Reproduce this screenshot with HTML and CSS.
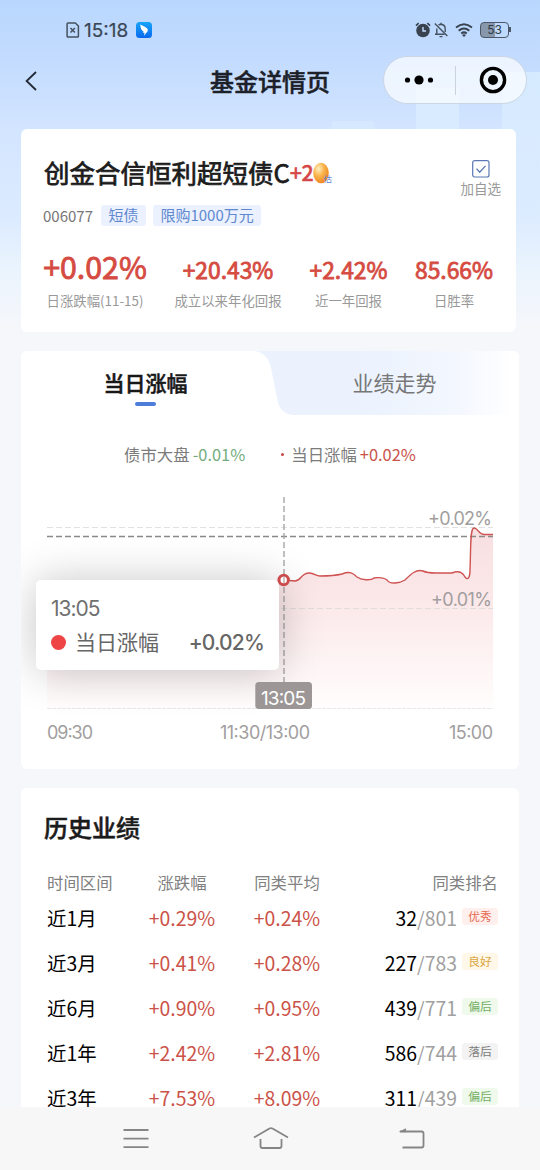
FILE: index.html
```html
<!DOCTYPE html>
<html lang="zh-CN">
<head>
<meta charset="utf-8">
<title>基金详情页</title>
<link rel="stylesheet" href="styles.css">
</head>
<body>
<div class="screen">
  <div class="decor"><i class="bar bar-a"></i><i class="bar bar-b"></i><i class="bar bar-c"></i></div>
  <header class="status">
    <div class="status-left">
      <svg width="14" height="16" viewBox="0 0 14 16" fill="none" stroke="#46515f" stroke-width="1.5"><path d="M2 .9h7.3L12.4 4v10.2q0 .8-.8.8H2q-.9 0-.9-.8V1.800Q1.100.9 2 .9Z"/><path d="M4.500 6l4.400 4.600M8.900 6l-4.400 4.600"/></svg>
      <span class="clock">15:18</span>
      <svg width="16" height="16" viewBox="0 0 16 16"><defs><linearGradient id="app" x2="0" y2="1"><stop stop-color="#18a4fa"/><stop offset="1" stop-color="#0869ee"/></linearGradient></defs><rect width="16" height="16" rx="3.500" fill="url(#app)"/><path d="M4.300 2.600Q9 4.700 11.700 6.900q.4.700-.3 1.900H12L8 13.800l.6-3H7l.5-1.300Q4.500 8 4.300 2.600Z" fill="#fff"/></svg>
    </div>
    <div class="status-right">
      <svg width="16" height="16" viewBox="0 0 16 16"><circle cx="8" cy="8.500" r="6.800" fill="#38434f"/><path d="M.9 3.600 3.700 1.200M12.300 1.200l2.800 2.400" stroke="#38434f" stroke-width="1.600"/><path d="M8 5v4h3" fill="none" stroke="#c5ddfe" stroke-width="1.400"/></svg>
      <svg width="14" height="16" viewBox="0 0 14 16" fill="none" stroke="#46515f" stroke-width="1.400"><path d="M2.800 12V6.500M4.500 3.200Q5.500 2.500 7 2.300q4.200.7 4.200 4.200V10M1 12.300h9.500M7 .8v2M5.500 14.600h3"/><path d="M.8 1.500 13.300 14"/></svg>
      <svg class="wifi" width="18" height="14" viewBox="0 0 18 14" fill="none" stroke="#38434f" stroke-width="2"><path d="M1 4.500q8-6.500 16 0M3.700 7.700q5.300-4.400 10.600 0M6.300 10.500q2.700-2.300 5.400 0"/><path d="m9 14-2-2q2-1.500 4 0Z" fill="#38434f" stroke="none"/></svg>
      <div class="battery"><span>53</span></div>
    </div>
  </header>
  <nav class="titlebar">
    <svg class="back" width="12" height="20" viewBox="0 0 12 20" fill="none" stroke="#222a35" stroke-width="1.800"><path d="M11 1 1.600 10 11 19"/></svg>
    <h1>基金详情页</h1>
    <div class="capsule">
      <svg width="30" height="10" viewBox="0 0 30 10"><circle cx="3.500" cy="5" r="2.600"/><circle cx="15" cy="5" r="4.600"/><circle cx="26.500" cy="5" r="2.600"/></svg>
      <i></i>
      <svg width="28" height="28" viewBox="0 0 28 28"><circle cx="14" cy="14" r="11.600" fill="none" stroke="#000" stroke-width="3.400"/><circle cx="14" cy="14" r="5"/></svg>
    </div>
  </nav>

  <section class="card fund">
    <div class="fund-head">
      <div>
        <h2>创金合信恒利超短债C<b>+2</b><svg class="egg" width="20" height="22" viewBox="0 0 20 22"><defs><radialGradient id="egg" cx=".35" cy=".3" r=".75"><stop stop-color="#fff0c4"/><stop offset=".45" stop-color="#f9b64d"/><stop offset="1" stop-color="#ee8220"/></radialGradient></defs><ellipse cx="8" cy="11" rx="7.800" ry="10.300" fill="url(#egg)"/><text x="10.500" y="19.500">估</text></svg></h2>
        <div class="tags"><span>006077</span><em>短债</em><em>限购1000万元</em></div>
      </div>
      <div class="watch"><svg width="18" height="18" viewBox="0 0 18 18" fill="none" stroke="#5b78b4"><rect x=".7" y=".7" width="16.300" height="16.300" rx="2" stroke-width="1.200"/><path d="m4.500 8.600 3.200 3.700 5.800-6.400" stroke-width="1.300"/></svg><span>加自选</span></div>
    </div>
    <div class="stats">
      <div class="main"><strong>+0.02%</strong><span>日涨跌幅(11-15)</span></div>
      <div><strong>+20.43%</strong><span>成立以来年化回报</span></div>
      <div><strong>+2.42%</strong><span>近一年回报</span></div>
      <div><strong>85.66%</strong><span>日胜率</span></div>
    </div>
  </section>

  <section class="card trend">
    <div class="tabs">
      <svg class="tab-bg" width="498" height="65" viewBox="0 0 498 65"><defs><linearGradient id="tab"><stop offset=".4" stop-color="#ebf2fe"/><stop offset=".76" stop-color="#f3f7fe"/><stop offset=".98" stop-color="#fff"/></linearGradient></defs><path d="M231 0h267v64H274q-13 0-17-12L250 17Q246 0 231 0Z" fill="url(#tab)"/></svg>
      <div class="tab active">当日涨幅</div>
      <div class="tab">业绩走势</div>
    </div>
    <div class="legend"><span>债市大盘 <b class="down">-0.01%</b></span><span><i></i>当日涨幅 <b class="up">+0.02%</b></span></div>
    <div class="chart">
      <svg width="498" height="275" viewBox="21 490 498 275">
        <defs><linearGradient id="area" gradientUnits="userSpaceOnUse" x1="0" y1="527" x2="0" y2="708"><stop stop-color="#f8dfe1"/><stop offset=".45" stop-color="#fce9ea"/><stop offset="1" stop-color="#fffdfd"/></linearGradient></defs>
        <path fill="url(#area)" d="M47 580H284L295 581C301 581 301 573 309 573C315 573 315 576 320 576C328 576 338 575 342 574C350 571 353 573 357 577C361 580 371 581 374 578C379 577 385 578 387 580C390 585 400 583 405 580C411 574 416 569 423 571C427 573 430 573 436 573H452C459 570 463 573 465 577C468 581 470 577 470 570C471 546 470 528 474 528C478 528 478 534 484 534.500H493V708H47Z"/>
        <g fill="none" stroke-dasharray="6 3"><path d="M47 527.500H493M47 608.500H493" stroke="#dcd8d9" stroke-opacity=".8"/><path d="M47 536.500H493" stroke="#898989" stroke-width="1.400"/><path d="M284 497V683" stroke="#aaa5a6" stroke-width="1.400"/></g>
        <path d="M47 708.500H493" stroke="#e8e8e8" stroke-dasharray="4 1"/>
        <path fill="none" stroke="#cf5352" stroke-width="1.400" d="M284 580L295 581C301 581 301 573 309 573C315 573 315 576 320 576C328 576 338 575 342 574C350 571 353 573 357 577C361 580 371 581 374 578C379 577 385 578 387 580C390 585 400 583 405 580C411 574 416 569 423 571C427 573 430 573 436 573H452C459 570 463 573 465 577C468 581 470 577 470 570C471 546 470 528 474 528C478 528 478 534 484 534.500H493"/>
        <g class="axis"><text x="428" y="525" textLength="64">+0.02%</text><text x="431" y="606" textLength="61">+0.01%</text><text x="47" y="738.500" textLength="46">09:30</text><text x="220" y="738.500" textLength="90">11:30/13:00</text><text x="449" y="738.500" textLength="44">15:00</text></g>
      </svg>
      <div class="tooltip">
        <time>13:05</time>
        <div><i></i><span>当日涨幅</span><b>+0.02%</b></div>
      </div>
      <svg class="cursor" width="60" height="145" viewBox="254 570 60 145"><circle cx="283.700" cy="580" r="4.700" fill="#fff" stroke="#cc4b4d" stroke-width="3"/><path d="M284 576v7" stroke="#b9a5a6" stroke-width="1.300"/><rect x="255.300" y="682" width="56.700" height="27" rx="3.500" fill="#9c9796"/><text x="261" y="705" textLength="45">13:05</text></svg>
    </div>
  </section>

  <section class="card history">
    <h3>历史业绩</h3>
    <div class="row head"><span>时间区间</span><span>涨跌幅</span><span>同类平均</span><span>同类排名</span></div>
    <div class="row"><span>近1月</span><span>+0.29%</span><span>+0.24%</span><span>32<s>/801</s><em class="great">优秀</em></span></div>
    <div class="row"><span>近3月</span><span>+0.41%</span><span>+0.28%</span><span>227<s>/783</s><em class="good">良好</em></span></div>
    <div class="row"><span>近6月</span><span>+0.90%</span><span>+0.95%</span><span>439<s>/771</s><em class="low">偏后</em></span></div>
    <div class="row"><span>近1年</span><span>+2.42%</span><span>+2.81%</span><span>586<s>/744</s><em class="last">落后</em></span></div>
    <div class="row"><span>近3年</span><span>+7.53%</span><span>+8.09%</span><span>311<s>/439</s><em class="low">偏后</em></span></div>
  </section>

  <footer class="sysnav">
    <svg width="26" height="22" viewBox="0 0 26 22" fill="none" stroke="#858585" stroke-width="1.800"><path d="M.5 2h25M.5 10.600h25M.5 19.100h25"/></svg>
    <svg class="home" width="36" height="24" viewBox="0 0 36 24" fill="none" stroke="#858585" stroke-width="1.800"><path d="M1 11.500 16.500 2.500q1.500-.8 3 0L35 11.500M7.500 13v7q0 2 2 2h17q2 0 2-2v-7"/></svg>
    <svg width="27" height="22" viewBox="0 0 27 22" fill="none" stroke="#858585" stroke-width="1.800"><path d="M2 3.500h21.500q2 0 2 2v12q0 2-2 2H4.500"/><path d="M.5 4.100 8 .3v4Z" fill="#858585" stroke="none"/></svg>
  </footer>
</div>
</body>
</html>
```
FILE: styles.css
```css
* { box-sizing: border-box; }
body, h1, h2, h3 { margin: 0; }
em, i { font-style: normal; }
s { text-decoration: none; }
svg { display: block; flex: none; }
body { font-family: "Noto Sans CJK SC", sans-serif; color: #1c1c1c; }
.screen {
  position: relative; width: 540px; height: 1170px; overflow: hidden;
  display: flex; flex-direction: column;
  background: linear-gradient(#b9d7fe 0, #c4dcfe 65px, #d3e5ff 130px, #dcebff 220px, #eaf4fd 270px, #f5f7fb 325px, #f5f7fb 100%);
}
.decor { position: absolute; inset: 0; }
.bar { position: absolute; background: linear-gradient(rgba(225,243,255,.6), rgba(225,243,255,0)); }
.bar-a { left: 332px; top: 121px; width: 42px; height: 120px; border-radius: 3px; opacity: .5; }
.bar-b { left: 416px; top: 88px; width: 43px; height: 150px; }
.bar-c { left: 502px; top: 72px; width: 38px; height: 180px; }

.status { position: relative; height: 56px; padding: 4px 31px 0 66px; display: flex; align-items: center; justify-content: space-between; flex: none; }
.status-left, .status-right { display: flex; align-items: center; }
.clock { font: 400 19px/24px Inter, sans-serif; -webkit-text-stroke: .2px; letter-spacing: 0; color: #3b4654; width: 47px; padding-top: 1px; margin: 0 5px 0 4px; white-space: nowrap; }
.status-right { gap: 3px; }
.wifi { margin: 0 4px 0 4px; }
.battery { position: relative; width: 29px; height: 16px; border: 1.500px solid #4c5867; border-radius: 4px; background: linear-gradient(90deg, #8798ad 52%, transparent 52%); font: 12px/14px Inter, sans-serif; text-align: center; color: #303a47; }
.battery::after { content: ""; position: absolute; right: -3px; top: 4px; width: 2px; height: 5px; background: #4c5867; }

.titlebar { position: relative; height: 73px; flex: none; display: grid; grid-template-columns: 185px 170px 1fr; align-items: start; }
.back { margin: 15px 0 0 25px; }
h1 { font-size: 24px; line-height: 50px; font-weight: 500; -webkit-text-stroke: .5px; text-align: center; color: #1b2029; }
.capsule { margin: 0 13px 0 28px; height: 48px; border: 1px solid #cbd6e5; border-radius: 24px; background: rgba(250,252,255,.75); display: flex; align-items: center; justify-content: space-between; padding: 0 19px 0 20px; }
.capsule i { width: 1px; height: 29px; background: #cbd2dc; margin-right: 3px; }

.card { position: relative; background: #fff; border-radius: 6px; margin: 0 21px; flex: none; }
.fund { width: 495px; height: 203px; padding: 25px 0 0 22px; }
.fund-head { display: flex; justify-content: space-between; padding-right: 15px; height: 90px; }
h2 { display: flex; align-items: center; font-size: 25.500px; line-height: 36px; font-weight: 400; -webkit-text-stroke: .75px; padding-left: 1px; white-space: nowrap; }
h2 b { font-size: 21.500px; color: #d4484a; letter-spacing: -.5px; font-weight: 500; -webkit-text-stroke: .4px; }
.egg { margin: 1px 0 0 0; overflow: visible; }
.egg text { font-size: 8.500px; fill: #5f87d9; stroke: none; -webkit-text-stroke: 0; }
.tags { display: flex; align-items: center; gap: 7px; height: 21px; margin-top: 15px; font-size: 15px; color: #777; }
.tags span { margin-right: 1px; line-height: 20px; }
.tags em { color: #6088d0; background: #ebf1fe; border-radius: 3px; padding: 0 7.500px; height: 21px; line-height: 20px; font-size: 15px; }
.watch { display: flex; flex-direction: column; align-items: center; padding-top: 6px; font-size: 13.500px; line-height: 20px; color: #999; gap: 0; }
.stats { display: grid; grid-template-columns: 104px 142px 79px 112px; gap: 10px; justify-items: center; }
.stats div { display: flex; flex-direction: column; align-items: center; white-space: nowrap; }
.stats strong { font-size: 22.800px; font-weight: 400; -webkit-text-stroke: .8px; line-height: 46px; padding-top: 3px; color: #d54b41; height: 46px; }
.stats .main strong { font-size: 30.300px; line-height: 42px; padding-top: 1px; }
.stats span { font-size: 13.400px; line-height: 20px; color: #999; }

.trend { margin-top: 19px; height: 418px; overflow: hidden; }
.tabs { display: grid; grid-template-columns: 1fr 1fr; height: 65px; }
.tab-bg { grid-area: 1 / 1 / 2 / 3; }
.tab { grid-area: 1 / 2; font-size: 21px; line-height: 63px; text-align: center; color: #777; z-index: 1; }
.tab.active { grid-area: 1 / 1; font-weight: 500; -webkit-text-stroke: .5px; color: #181818; position: relative; }
.tab.active::after { content: ""; position: absolute; left: 114px; top: 51px; width: 21px; height: 4px; border-radius: 2px; background: #4c7ddb; }
.legend { display: flex; justify-content: center; gap: 36px; padding-top: 25px; height: 74px; font-size: 16.400px; line-height: 26px; color: #7c7c7c; }
.legend span { display: flex; align-items: center; gap: 3px; height: 26px; }
.legend b { font-weight: 400; }
.legend i { width: 3px; height: 3px; border-radius: 2px; background: #c54b48; margin-right: 4px; }
.down { color: #74ad7d; }
.up { color: #c9534b; }
.chart { position: relative; }
.axis { font: 400 18px Inter, sans-serif; fill: #a19e9e; }
.tooltip { position: absolute; left: 15px; top: 90px; width: 243px; height: 90px; background: #fff; border-radius: 5px; box-shadow: 0 1px 44px rgba(0,0,0,.23); padding: 15px; color: #666; }
.tooltip time { display: block; font: 400 21px/28px Inter, sans-serif; letter-spacing: -1px; color: #707070; }
.tooltip div { display: flex; align-items: center; height: 38px; font-size: 21px; line-height: 36px; }
.tooltip i { width: 15px; height: 15px; border-radius: 50%; background: #ef4446; margin-right: 9px; }
.tooltip span { height: 38px; }
.tooltip b { margin-left: auto; font: 500 21px Inter, sans-serif; letter-spacing: -.8px; }
.cursor { position: absolute; left: 233px; top: 80px; }
.cursor text { font: 400 19px Inter, sans-serif; fill: #fff; }

.history { margin-top: 19px; height: 340px; border-radius: 6px 6px 0 0; padding-top: 20px; }
h3 { font-size: 24px; line-height: 38px; font-weight: 500; -webkit-text-stroke: .5px; padding-left: 23px; color: #1b1b1b; }
.row { display: grid; grid-template-columns: 82px 106px 104px 159px; margin-left: 26px; height: 45px; line-height: 43px; font-size: 19.400px; color: #000; text-align: center; }
.row span:first-child { text-align: left; }
.row span:nth-child(2), .row span:nth-child(3) { color: #cb5248; }
.row span:last-child { display: flex; justify-content: flex-end; }
.row s { color: #a0a0a0; }
.row em { font-size: 11.800px; line-height: 16px; height: 17px; width: 36px; border-radius: 3px; margin: 12px 0 0 5px; text-align: center; }
.row.head { height: 26px; line-height: 24px; margin-top: 24px; font-size: 16.400px; }
.row.head span { color: #808080; }
.great { color: #e7684d; background: #fff0ed; }
.good { color: #dda645; background: #fff7e7; }
.low { color: #72ad63; background: #effaed; }
.last { color: #7b7b7b; background: #f3f3f3; }

.sysnav { position: absolute; left: 0; right: 0; bottom: 0; height: 63px; background: #f7f7f7; display: flex; justify-content: space-between; align-items: center; padding: 0 115px 0 122.500px; }
.home { margin: 0 5px 2px 0; }
```
